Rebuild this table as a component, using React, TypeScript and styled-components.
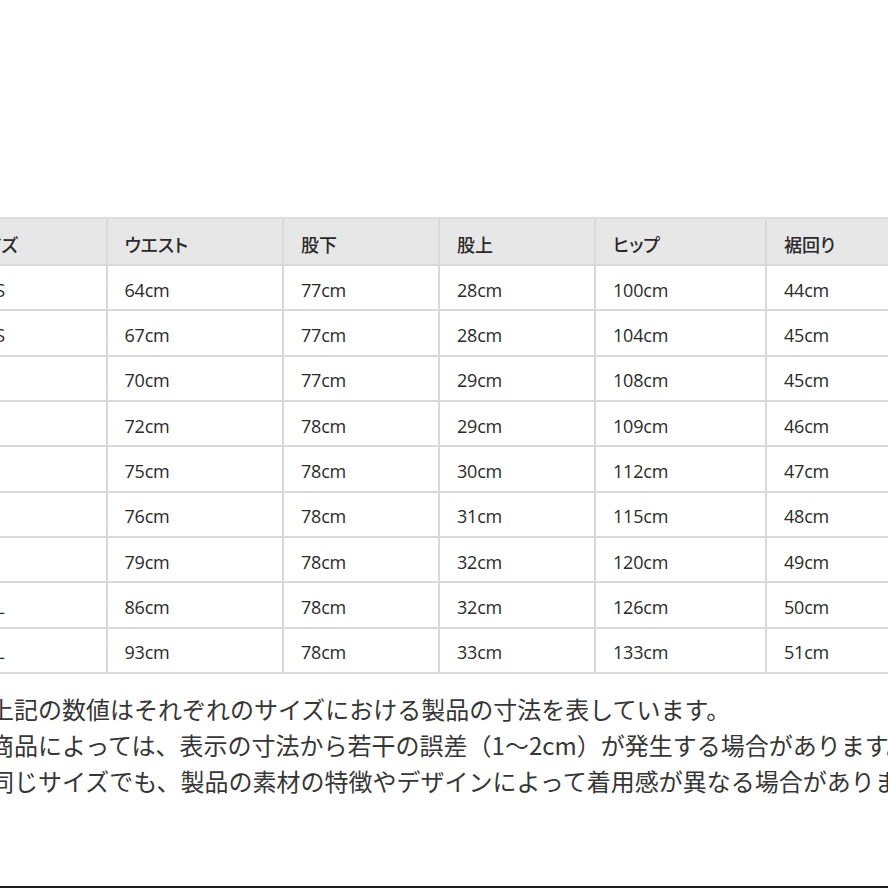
import React from "react";
import styled, { createGlobalStyle } from "styled-components";

const GlobalStyle = createGlobalStyle`
  html, body {
    margin: 0;
    padding: 0;
    background: #ffffff;
  }
  body {
    font-family: "Open Sans", "Noto Sans CJK JP", sans-serif;
  }
`;

const Page = styled.div`
  width: 888px;
  height: 888px;
  box-sizing: border-box;
  padding-top: 217px;
  overflow: hidden;
  background: #ffffff;
  display: flex;
  flex-direction: column;
`;

const SizeTable = styled.div`
  flex-shrink: 0;
  align-self: flex-start;
  margin-left: -48px;
  display: grid;
  grid-template-columns: 155.5px 176.5px 156px 156px 171px 160px;
  grid-template-rows: 47px repeat(9, 45.333px);
  border-top: 2px solid #dcdcdc;
`;

const Cell = styled.div<{ $head?: boolean; $lead?: boolean }>`
  box-sizing: border-box;
  display: flex;
  align-items: center;
  padding: 4px 0 0 ${(p) => (p.$lead ? "23px" : "17px")};
  border-right: 2px solid #d9d9d9;
  border-bottom: 2px solid #d9d9d9;
  background: ${(p) => (p.$head ? "#e7e7e7" : "#ffffff")};
  color: #2a2a2a;
  font-family: "Open Sans", "Noto Sans CJK JP", sans-serif;
  font-size: 18px;
  font-weight: 500;
  font-feature-settings: "palt";
  letter-spacing: ${(p) => (p.$head ? "0" : "-0.2px")};
  white-space: nowrap;
  overflow: hidden;
`;

const Notes = styled.div`
  flex-shrink: 0;
  margin: 17px 0 0 -10px;
  color: #363636;
  font-family: "Noto Sans CJK JP", sans-serif;
  font-size: 24px;
  line-height: 36px;
  white-space: nowrap;
`;

const NoteLine = styled.div`
  white-space: nowrap;
`;

const BottomRule = styled.div`
  margin-top: auto;
  flex-shrink: 0;
  height: 2px;
  background: #1c1c1c;
`;

const headers = ["サイズ", "ウエスト", "股下", "股上", "ヒップ", "裾回り"];

const rows: string[][] = [
  ["3XS", "64cm", "77cm", "28cm", "100cm", "44cm"],
  ["2XS", "67cm", "77cm", "28cm", "104cm", "45cm"],
  ["XS", "70cm", "77cm", "29cm", "108cm", "45cm"],
  ["S", "72cm", "78cm", "29cm", "109cm", "46cm"],
  ["M", "75cm", "78cm", "30cm", "112cm", "47cm"],
  ["L", "76cm", "78cm", "31cm", "115cm", "48cm"],
  ["XL", "79cm", "78cm", "32cm", "120cm", "49cm"],
  ["2XL", "86cm", "78cm", "32cm", "126cm", "50cm"],
  ["3XL", "93cm", "78cm", "33cm", "133cm", "51cm"],
];

const notes = [
  "上記の数値はそれぞれのサイズにおける製品の寸法を表しています。",
  "商品によっては、表示の寸法から若干の誤差（1〜2cm）が発生する場合があります。",
  "同じサイズでも、製品の素材の特徴やデザインによって着用感が異なる場合があります。",
];

export default function App() {
  return (
    <>
      <GlobalStyle />
      <Page>
        <SizeTable>
          {headers.map((h) => (
            <Cell key={h} $head>
              {h}
            </Cell>
          ))}
          {rows.map((r, i) =>
            r.map((v, j) => (
              <Cell key={`${i}-${j}`} $lead={j === 0}>
                {v}
              </Cell>
            ))
          )}
        </SizeTable>
        <Notes>
          {notes.map((n) => (
            <NoteLine key={n}>{n}</NoteLine>
          ))}
        </Notes>
        <BottomRule />
      </Page>
    </>
  );
}
